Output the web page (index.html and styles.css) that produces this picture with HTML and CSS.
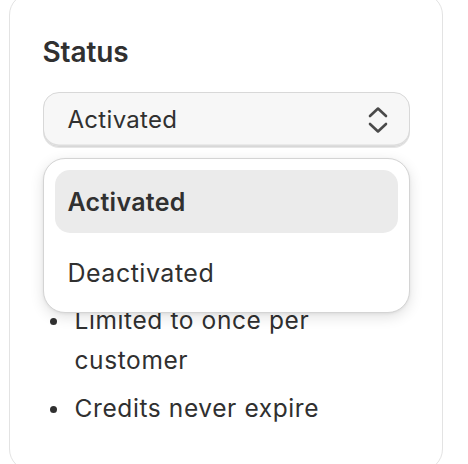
FILE: index.html
```html
<!DOCTYPE html>
<html lang="en">
<head>
<meta charset="utf-8">
<title>Status</title>
<link rel="stylesheet" href="styles.css">
</head>
<body>
<div class="card">
  <h2 class="title">Status</h2>
  <div class="field">
    <div class="select">
      <span class="select-value">Activated</span>
      <svg class="select-icon" width="20" height="28" viewBox="0 0 20 28" aria-hidden="true">
        <path d="M2 10 L10 2.5 L18 10" fill="none" stroke="#4a4a4a" stroke-width="2.6" stroke-linecap="round" stroke-linejoin="round"/>
        <path d="M2 18 L10 25.5 L18 18" fill="none" stroke="#4a4a4a" stroke-width="2.6" stroke-linecap="round" stroke-linejoin="round"/>
      </svg>
    </div>
    <ul class="popover" role="listbox">
      <li class="option option-selected" role="option">Activated</li>
      <li class="option" role="option">Deactivated</li>
    </ul>
  </div>
  <ul class="bullets">
    <li>Limited to once per customer</li>
    <li>Credits never expire</li>
  </ul>
</div>
</body>
</html>
```
FILE: styles.css
```css
* { box-sizing: border-box; }
html, body { margin: 0; padding: 0; background: #ffffff; }
body {
  font-family: Inter, "Noto Sans", "Liberation Sans", sans-serif;
  color: #303030;
  overflow: hidden;
}
.card {
  margin: -7px 0 0 9px;
  width: 434px;
  height: 478px;
  border: 1.5px solid #e3e3e3;
  border-radius: 22px;
  padding: 40px 32px 0 32.5px;
}
.title {
  margin: 0;
  font-size: 28px;
  line-height: 36px;
  font-weight: 600;
  letter-spacing: -0.1px;
}
.field {
  position: relative;
  margin-top: 22px;
}
.select {
  height: 55px;
  width: 367px;
  display: flex;
  align-items: center;
  justify-content: space-between;
  padding: 0 21px 0 24px;
  background: #f7f7f7;
  border: 1px solid #d8d8d8;
  border-radius: 16px;
  box-shadow: inset 0 -1.5px 0 #dddddd, 0 1px 0 #e6e6e6;
}
.select-value {
  font-size: 24px;
  line-height: 32px;
  letter-spacing: 0.3px;
}
.select-icon { display: block; }
.popover {
  position: absolute;
  left: 0;
  top: 66px;
  width: 367px;
  margin: 0;
  padding: 11px 11px 8px;
  list-style: none;
  background: #ffffff;
  border: 1px solid #d4d4d4;
  border-radius: 22px;
  box-shadow: 0 4px 14px rgba(0, 0, 0, 0.12), 0 1px 3px rgba(0, 0, 0, 0.06);
}
.option {
  height: 63px;
  display: flex;
  align-items: center;
  padding: 0 13px;
  font-size: 25px;
  line-height: 32px;
  letter-spacing: 0.5px;
  border-radius: 15px;
}
.option + .option { margin-top: 8px; }
.option-selected {
  background: #ebebeb;
  font-weight: 600;
  letter-spacing: 0.3px;
}
.bullets {
  list-style: none;
  margin: 153px 0 0;
  padding: 0;
  width: 300px;
}
.bullets li {
  display: flex;
  gap: 17.5px;
  padding-left: 7.5px;
  font-size: 24.5px;
  line-height: 40px;
  letter-spacing: 0.6px;
}
.bullets li + li { margin-top: 8px; }
.bullets li::before {
  content: "";
  flex: none;
  width: 7px;
  height: 7px;
  margin-top: 18px;
  border-radius: 50%;
  background: #303030;
}
```
